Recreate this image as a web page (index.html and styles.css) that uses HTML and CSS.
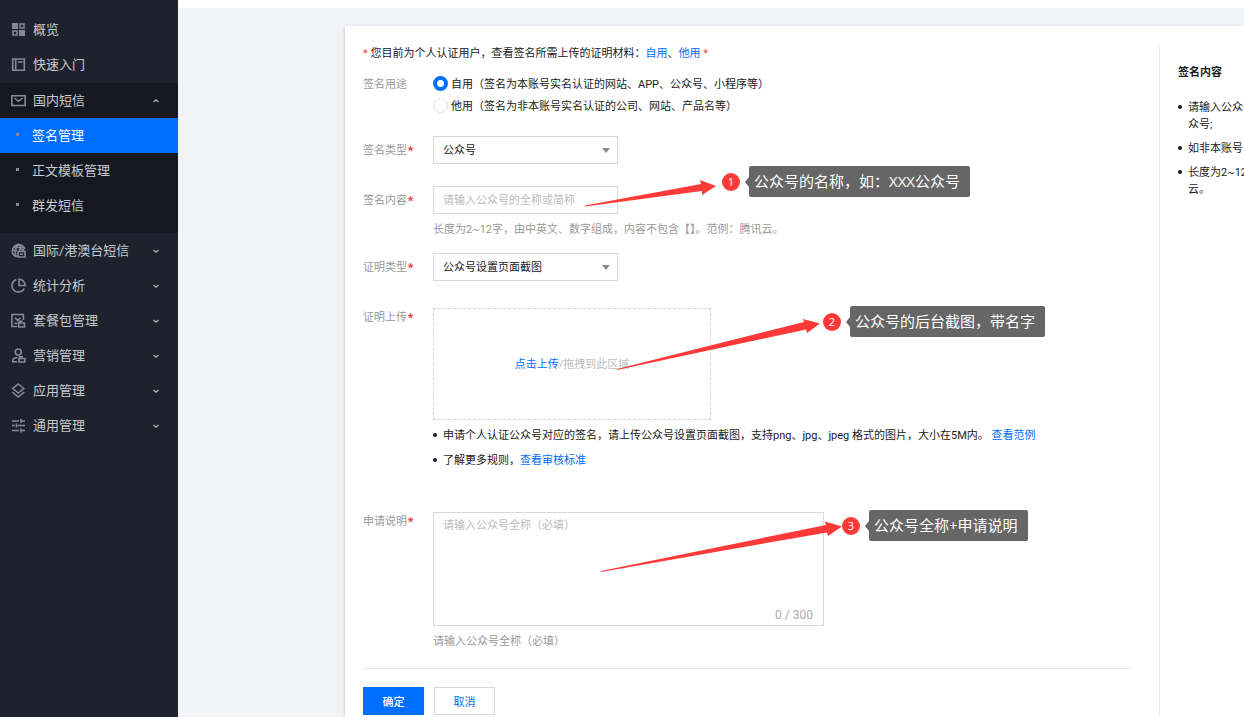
FILE: index.html
```html
<!DOCTYPE html>
<html lang="zh-CN">
<head>
<meta charset="utf-8">
<title>签名管理</title>
<link rel="stylesheet" href="styles.css">
</head>
<body>
<div class="app">
  <nav class="sidebar">
    <a class="nav-item" href="#">
      <svg class="nav-icon" viewBox="0 0 15 15"><path fill="currentColor" stroke="none" d="M1 1h6v6H1zM8 8h6v6H8z"/><path d="M9 2h4v4H9zM2 9h4v4H2z"/></svg>
      <span>概览</span>
    </a>
    <a class="nav-item" href="#">
      <svg class="nav-icon" viewBox="0 0 15 15"><path d="M1.700 2h11.600v11.300H1.700zM4.700 2v11.300M7 5h4.500"/></svg>
      <span>快速入门</span>
    </a>
    <div class="nav-group">
      <a class="nav-item" href="#">
        <svg class="nav-icon" viewBox="0 0 15 15"><path d="M.8 2.800h13.400v9.700H.8zM3.500 5l4 3.300 4-3.300"/></svg>
        <span>国内短信</span>
        <svg class="chevron" viewBox="0 0 8 8"><path d="M1.500 5 4 2.800 6.500 5"/></svg>
      </a>
      <a class="nav-sub nav-sub-active" href="#">签名管理</a>
      <a class="nav-sub" href="#">正文模板管理</a>
      <a class="nav-sub" href="#">群发短信</a>
    </div>
    <a class="nav-item" href="#">
      <svg class="nav-icon" viewBox="0 0 15 15"><path d="M5.500 14A6.400 6.400 0 1 1 13.800 6M1.200 7.500H6M2 4.500h10.500M5.500 14C3.500 10 4 4.500 7.300 1.200 9 2.700 9.700 4 10 6M7 8.500h7v5.500H7zM8.700 8V6.500h3.600V8M9 11.300h3"/></svg>
      <span>国际/港澳台短信</span>
      <svg class="chevron" viewBox="0 0 8 8"><path d="M1.500 3 4 5.200 6.500 3"/></svg>
    </a>
    <a class="nav-item" href="#">
      <svg class="nav-icon" viewBox="0 0 15 15"><path d="M5.300 1.500a6.500 6.500 0 1 0 8 9M8 1.200V7.500h6.100A6.300 6.300 0 0 0 8 1.200z"/></svg>
      <span>统计分析</span>
      <svg class="chevron" viewBox="0 0 8 8"><path d="M1.500 3 4 5.200 6.500 3"/></svg>
    </a>
    <a class="nav-item" href="#">
      <svg class="nav-icon" viewBox="0 0 15 15"><path d="M6 13.500H.9V1.500h11.500V7M4 4.800l2.700 2.500 2.700-2.500M3.500 10.300h3M7.700 10h5.800v4H7.700zM8.400 10V8.200h3.300"/></svg>
      <span>套餐包管理</span>
      <svg class="chevron" viewBox="0 0 8 8"><path d="M1.500 3 4 5.200 6.500 3"/></svg>
    </a>
    <a class="nav-item" href="#">
      <svg class="nav-icon" viewBox="0 0 15 15"><circle cx="7.300" cy="4" r="3"/><path d="M6.300 13.800H1.700V13c0-2 2-3.500 4.800-3.500M8 10.500h5.900v3.500H8zM8.700 10.500V8.800h3.300"/></svg>
      <span>营销管理</span>
      <svg class="chevron" viewBox="0 0 8 8"><path d="M1.500 3 4 5.200 6.500 3"/></svg>
    </a>
    <a class="nav-item" href="#">
      <svg class="nav-icon" viewBox="0 0 15 15"><path d="m7.300 1 5.500 4.500-5.500 4.500-5.500-4.500zM1.300 9l6 5 6-5"/></svg>
      <span>应用管理</span>
      <svg class="chevron" viewBox="0 0 8 8"><path d="M1.500 3 4 5.200 6.500 3"/></svg>
    </a>
    <a class="nav-item" href="#">
      <svg class="nav-icon" viewBox="0 0 15 15"><path d="M1 3h7M10 3h4M10 1v4M1 7.500h3M5.500 5.500v4M7 7.500h7M1 12.500h7M10 12.500h4M10 10.500v4"/></svg>
      <span>通用管理</span>
      <svg class="chevron" viewBox="0 0 8 8"><path d="M1.500 3 4 5.200 6.500 3"/></svg>
    </a>
  </nav>

  <main class="main">
    <div class="card">
      <form class="form">
        <p class="intro"><span class="star">*</span> 您目前为个人认证用户，查看签名所需上传的证明材料：<a href="#">自用</a>、<a href="#">他用</a> <span class="star">*</span></p>

        <div class="row row-usage" role="radiogroup" aria-labelledby="usage">
          <span class="label" id="usage">签名用途</span>
          <div>
            <label class="radio"><input type="radio" name="usage" checked>自用（签名为本账号实名认证的网站、APP、公众号、小程序等）</label>
            <label class="radio"><input type="radio" name="usage">他用（签名为非本账号实名认证的公司、网站、产品名等）</label>
          </div>
        </div>

        <div class="row row-type">
          <label class="label label-control" for="type">签名类型<span class="req">*</span></label>
          <div class="select-box">
            <select class="control" id="type"><option>公众号</option></select>
            <svg class="caret" viewBox="0 0 8 6"><path d="M0 0h8L4 5z"/></svg>
          </div>
        </div>

        <div class="row row-content">
          <label class="label label-control" for="content">签名内容<span class="req">*</span></label>
          <div>
            <input class="control" id="content" type="text" placeholder="请输入公众号的全称或简称">
            <p class="hint">长度为2~12字，由中英文、数字组成，内容不包含【】。范例：腾讯云。</p>
          </div>
        </div>

        <div class="row row-proof">
          <label class="label label-control" for="proof">证明类型<span class="req">*</span></label>
          <div class="select-box">
            <select class="control" id="proof"><option>公众号设置页面截图</option></select>
            <svg class="caret" viewBox="0 0 8 6"><path d="M0 0h8L4 5z"/></svg>
          </div>
        </div>

        <div class="row row-upload">
          <span class="label">证明上传<span class="req">*</span></span>
          <div>
            <div class="upload"><a href="#">点击上传</a>/拖拽到此区域</div>
            <ul class="notes">
              <li>申请个人认证公众号对应的签名，请上传公众号设置页面截图，支持png、jpg、jpeg 格式的图片，大小在5M内。 <a href="#">查看范例</a></li>
              <li>了解更多规则，<a href="#">查看审核标准</a></li>
            </ul>
          </div>
        </div>

        <div class="row row-desc">
          <label class="label" for="desc">申请说明<span class="req">*</span></label>
          <div>
            <div class="textarea-box">
              <textarea id="desc" placeholder="请输入公众号全称（必填）"></textarea>
              <span class="counter">0 / 300</span>
            </div>
            <p class="hint">请输入公众号全称（必填）</p>
          </div>
        </div>

        <div class="actions">
          <button class="btn btn-primary" type="submit">确定</button>
          <button class="btn" type="button">取消</button>
        </div>
      </form>

      <aside class="tips">
        <h2>签名内容</h2>
        <ul>
          <li>请输入公众号<br>众号;</li>
          <li>如非本账号</li>
          <li>长度为2~12<br>云。</li>
        </ul>
      </aside>
    </div>
  </main>

  <div class="annotations">
    <svg class="arrows" viewBox="0 0 1244 717">
      <path d="M585 205.500 701 184 700 180 716 186 702 195 702 191 585 206.500z"/>
      <path d="M617 369 804 322 803 319 820 323.500 807 333 806 329.500 617 370z"/>
      <path d="M601 571 826 525 825 521.500 842 526.500 828 536 827 532.500 601 572z"/>
    </svg>
    <div class="callout callout-1"><span class="badge">1</span><span class="bubble">公众号的名称，如：XXX公众号</span></div>
    <div class="callout callout-2"><span class="badge">2</span><span class="bubble">公众号的后台截图，带名字</span></div>
    <div class="callout callout-3"><span class="badge">3</span><span class="bubble">公众号全称+申请说明</span></div>
  </div>
</div>
</body>
</html>
```
FILE: styles.css
```css
* {
  box-sizing: border-box;
}

body {
  margin: 0;
  overflow: hidden;
  color: #1a1a1a;
  background: #f2f3f7;
  font-family: Roboto, "Noto Sans CJK SC", sans-serif;
  font-size: 11px;
}

p, ul, h2 {
  margin: 0;
  padding: 0;
}

a {
  color: #006eff;
  text-decoration: none;
}

input, select, textarea, button {
  margin: 0;
  font: inherit;
}

.app {
  position: relative;
  display: flex;
  height: 100vh;
}

/* Sidebar */
.sidebar {
  flex: none;
  width: 178px;
  padding-top: 12px;
  background: #1e222d;
  font-size: 13px;
}

.nav-item {
  display: flex;
  align-items: center;
  height: 35px;
  padding: 0 18px 0 11px;
  color: #c9cacd;
}

.nav-item span {
  padding-bottom: 2px;
}

.nav-icon {
  flex: none;
  width: 15px;
  height: 15px;
  margin-right: 7px;
  color: #858b94;
  fill: none;
  stroke: currentColor;
  stroke-width: 1.6;
}

.chevron {
  width: 8px;
  height: 8px;
  margin-left: auto;
  fill: none;
  stroke: #b4b6ba;
  stroke-width: 1.3;
}

.nav-group {
  margin-top: 1px;
  padding-bottom: 10px;
  background: #161821;
}

.nav-sub {
  display: flex;
  align-items: center;
  height: 35px;
  padding: 0 0 2px 16px;
  color: #c9cacd;
}

.nav-sub::before {
  content: "";
  width: 3px;
  height: 3px;
  margin-right: 13px;
  background: #858b94;
}

.nav-sub-active {
  color: #fff;
  background: #006eff;
}

/* Main area */
.main {
  display: flex;
  flex: 1;
  min-width: 0;
  padding: 18px 0 0 167px;
  border-top: 8px solid #fff;
  overflow: hidden;
}

.card {
  display: flex;
  flex: 1;
  min-width: 0;
  padding: 17px 0 0 18px;
  background: #fff;
  box-shadow: 0 1px 3px rgba(54, 58, 80, 0.3);
}

.form {
  flex: 1;
  min-width: 0;
  padding-right: 28px;
}

.intro {
  line-height: 22px;
}

.star {
  color: #e54545;
}

.row {
  display: grid;
  grid-template-columns: 70px minmax(0, 1fr);
}

.row-usage { margin-top: 7px; }
.row-type { margin-top: 20px; }
.row-content { margin-top: 20px; }
.row-proof { margin-top: 13px; }
.row-upload { margin-top: 25px; }
.row-desc { margin-top: 42px; }

.label {
  color: #999;
  line-height: 20px;
}

.row-usage .label {
  line-height: 26px;
}

.row .label-control {
  line-height: 30px;
}

.req {
  color: #e54545;
  font-family: "Noto Sans CJK SC", sans-serif;
  font-size: 15px;
  font-weight: 500;
  line-height: 1;
  vertical-align: -4px;
}

.radio {
  display: flex;
  align-items: center;
  gap: 3px;
  height: 22px;
}

.radio input {
  width: 15px;
  height: 15px;
  appearance: none;
  border: 1px solid #dcdfe6;
  border-radius: 50%;
  background: #fff;
}

.radio input:checked {
  border: 4px solid #006eff;
}

.select-box {
  position: relative;
  width: 185px;
}

.control {
  display: block;
  width: 185px;
  height: 28px;
  padding: 0 9px;
  appearance: none;
  border: 1px solid #d5d8e0;
  border-radius: 0;
  outline: none;
  color: #1a1a1a;
  background: #fff;
}

.control::placeholder,
textarea::placeholder {
  color: #bbb;
}

.caret {
  position: absolute;
  top: 12px;
  right: 8px;
  width: 8px;
  height: 6px;
  fill: #888;
}

.hint {
  margin-top: 6px;
  color: #999;
  line-height: 20px;
}

.upload {
  display: flex;
  align-items: center;
  justify-content: center;
  width: 278px;
  height: 112px;
  padding-bottom: 2px;
  border: 1px dashed #d0d4de;
  color: #bbb;
}

.notes {
  display: grid;
  gap: 7px;
  margin-top: 7px;
  list-style: none;
  line-height: 18px;
  white-space: nowrap;
}

.notes li,
.tips li {
  position: relative;
  padding-left: 10px;
}

.notes li::before,
.tips li::before {
  content: "";
  position: absolute;
  top: 6px;
  left: 0;
  width: 4px;
  height: 4px;
  border-radius: 50%;
  background: #1a1a1a;
}

.textarea-box {
  position: relative;
  width: 391px;
}

textarea {
  display: block;
  width: 100%;
  height: 114px;
  padding: 4px 9px;
  resize: none;
  border: 1px solid #d5d8e0;
  border-radius: 0;
  outline: none;
  background: #fff;
  line-height: 18px;
}

.counter {
  position: absolute;
  right: 11px;
  bottom: 3px;
  color: #aaa;
  font-size: 12px;
  line-height: 16px;
}

.actions {
  display: flex;
  gap: 10px;
  margin-top: 16px;
  padding: 18px 0 24px;
  border-top: 1px solid #e5e8ef;
}

.btn {
  width: 61px;
  height: 28px;
  padding: 0;
  border: 1px solid #d5d8e0;
  color: #006eff;
  background: #fff;
}

.btn-primary {
  border-color: #006eff;
  color: #fff;
  background: #006eff;
  font-weight: 500;
}

/* Tips column */
.tips {
  flex: none;
  width: 85px;
  margin-top: 2px;
  padding: 19px 0 0 18px;
  border-left: 1px solid #e9ebf0;
  overflow: hidden;
  white-space: nowrap;
}

.tips h2 {
  font-size: 11px;
  font-weight: 700;
  line-height: 18px;
}

.tips ul {
  display: grid;
  gap: 7px;
  margin-top: 17px;
  list-style: none;
  line-height: 17px;
}

/* Numbered annotations drawn over the form */
.annotations {
  position: absolute;
  top: 0;
  left: 0;
  pointer-events: none;
}

.arrows {
  display: block;
  width: 1244px;
  height: 717px;
  fill: #fe3a39;
}

.callout {
  position: absolute;
  display: flex;
  align-items: center;
  gap: 9px;
  white-space: nowrap;
}

.callout-1 { top: 166px; left: 722px; }
.callout-2 { top: 306px; left: 823px; }
.callout-3 { top: 510px; left: 842px; }

.badge {
  width: 18px;
  height: 18px;
  border-radius: 50%;
  color: #fff;
  background: #fe3a39;
  font-family: "Open Sans", sans-serif;
  font-size: 11px;
  line-height: 18px;
  text-align: center;
}

.bubble {
  position: relative;
  height: 31px;
  padding: 0 10px 0 5px;
  border-radius: 2px;
  color: #fff;
  background: #666;
  font-family: "Open Sans", "Noto Sans CJK SC", sans-serif;
  font-size: 15px;
  line-height: 31px;
}

.bubble::before {
  content: "";
  position: absolute;
  top: 11px;
  left: -4px;
  border: solid transparent;
  border-width: 5px 4px 5px 0;
  border-right-color: #666;
}
```
